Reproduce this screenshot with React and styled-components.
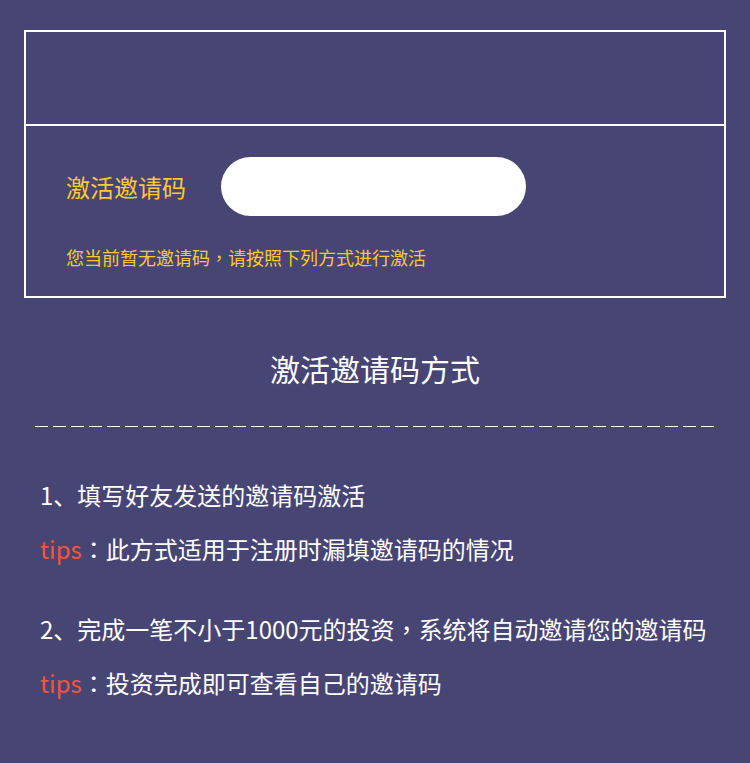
import React from "react";
import styled, { createGlobalStyle } from "styled-components";

const Global = createGlobalStyle`
  html, body { margin: 0; padding: 0; background: #474573; }
  body { font-family: "Noto Sans CJK SC", "Noto Sans", sans-serif; }
`;

const Page = styled.div`
  width: 750px;
  min-height: 763px;
  background: #474573;
  padding: 30px 24px 0;
  box-sizing: border-box;
`;

const Card = styled.div`
  border: 2px solid #ffffff;
  display: flex;
  flex-direction: column;
`;

const CardTop = styled.div`
  height: 92px;
  border-bottom: 2px solid #ffffff;
`;

const CardBody = styled.div`
  padding: 31px 40px 0;
  height: 170px;
  box-sizing: border-box;
`;

const FieldRow = styled.div`
  display: flex;
  align-items: center;
  gap: 35px;
`;

const Label = styled.label`
  width: 120px;
  font-size: 24px;
  line-height: 32px;
  color: #fbca2c;
  white-space: nowrap;
`;

const Input = styled.input`
  width: 305px;
  height: 59px;
  border: none;
  border-radius: 30px;
  background: #ffffff;
  outline: none;
  box-sizing: border-box;
  padding: 0 24px;
  font-size: 20px;
  font-family: inherit;
`;

const Notice = styled.p`
  margin: 29px 0 0;
  font-size: 18px;
  line-height: 24px;
  color: #fbca2c;
  white-space: nowrap;
`;

const Punct = styled.span`
  font-family: "Noto Sans CJK TC", "Noto Sans CJK SC", sans-serif;
`;

const Heading = styled.h2`
  margin: 50px 0 0;
  text-align: center;
  font-size: 30px;
  line-height: 40px;
  font-weight: 400;
  color: #ffffff;
`;

const Dashes = styled.div`
  margin: 38px 12px 0 11px;
  height: 1px;
  background: repeating-linear-gradient(
    to right,
    #ffffff 0,
    #ffffff 13px,
    transparent 13px,
    transparent 18px
  );
`;

const MethodList = styled.div`
  margin-top: 52px;
  padding-left: 16px;
  display: flex;
  flex-direction: column;
  gap: 48px;
`;

const Method = styled.div`
  display: flex;
  flex-direction: column;
  gap: 22px;
`;

const Line = styled.div`
  font-size: 24px;
  line-height: 32px;
  color: #ffffff;
  white-space: nowrap;
`;

const Tip = styled.span`
  color: #f4553c;
`;

const methods = [
  {
    title: "1、填写好友发送的邀请码激活",
    tip: "此方式适用于注册时漏填邀请码的情况",
  },
  {
    title: (
      <>
        2、完成一笔不小于1000元的投资<Punct>，</Punct>系统将自动邀请您的邀请码
      </>
    ),
    tip: "投资完成即可查看自己的邀请码",
  },
];

export default function App() {
  return (
    <>
      <Global />
      <Page>
        <Card>
          <CardTop />
          <CardBody>
            <FieldRow>
              <Label htmlFor="code">激活邀请码</Label>
              <Input id="code" type="text" />
            </FieldRow>
            <Notice>
              您当前暂无邀请码<Punct>，</Punct>请按照下列方式进行激活
            </Notice>
          </CardBody>
        </Card>
        <Heading>激活邀请码方式</Heading>
        <Dashes />
        <MethodList>
          {methods.map((m, i) => (
            <Method key={i}>
              <Line>{m.title}</Line>
              <Line>
                <Tip>tips</Tip>
                <Punct>：</Punct>
                {m.tip}
              </Line>
            </Method>
          ))}
        </MethodList>
      </Page>
    </>
  );
}
